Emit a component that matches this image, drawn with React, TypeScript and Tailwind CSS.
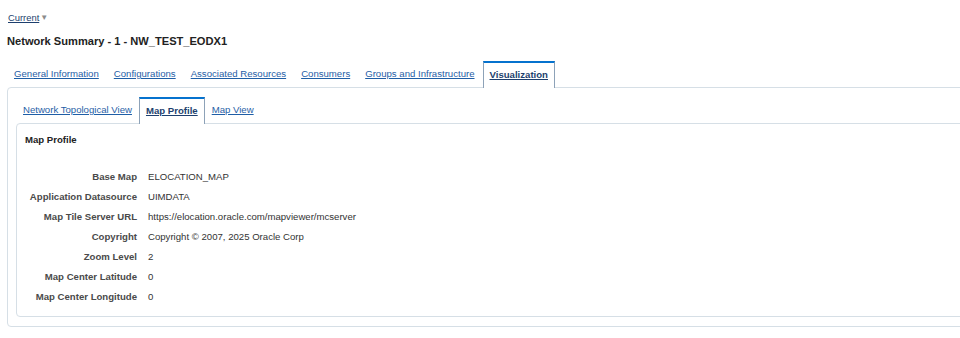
import React from "react";

const outerTabs = [
  "General Information",
  "Configurations",
  "Associated Resources",
  "Consumers",
  "Groups and Infrastructure",
];

const innerTabs = ["Network Topological View", "Map Profile", "Map View"];

const rows: [string, string][] = [
  ["Base Map", "ELOCATION_MAP"],
  ["Application Datasource", "UIMDATA"],
  ["Map Tile Server URL", "https://elocation.oracle.com/mapviewer/mcserver"],
  ["Copyright", "Copyright \u00a9 2007, 2025 Oracle Corp"],
  ["Zoom Level", "2"],
  ["Map Center Latitude", "0"],
  ["Map Center Longitude", "0"],
];

const Tab = ({ label, active }: { label: string; active?: boolean }) =>
  active ? (
    <div className="relative z-10 -mb-px flex h-[27px] items-center border-x border-t-2 border-x-[#8da2b8] border-t-[#0572ce] bg-white px-[6px]">
      <a href="#" className="font-bold text-[#1d3f6e] underline">
        {label}
      </a>
    </div>
  ) : (
    <div className="flex h-[26px] items-center px-[7px]">
      <a href="#" className="text-[#1f5ea6] underline">
        {label}
      </a>
    </div>
  );

const App = () => {
  return (
    <div className="h-[338px] w-[960px] overflow-hidden bg-white font-['Liberation_Sans',Arial,sans-serif] text-[9.6px] text-[#333]">
      <div className="flex h-[25px] items-end pl-[8px]">
        <a href="#" className="text-[9.4px] text-[#1d3f6e] underline">
          Current
        </a>
        <span className="ml-[1px] mb-[1px] text-[8px] text-[#8c8c8c]">▼</span>
      </div>
      <h1 className="mt-[9px] pl-[7px] text-[11.1px] font-bold leading-[14px] text-[#222]">
        Network Summary - 1 - NW_TEST_EODX1
      </h1>

      <div className="mt-[13px] flex items-end gap-px pl-[7px]">
        {outerTabs.map((t) => (
          <Tab key={t} label={t} />
        ))}
        <Tab label="Visualization" active />
      </div>

      <div className="ml-[7px] h-[240px] w-[1000px] rounded-[4px] border border-[#d6dfe6] pl-[8px] pt-[9px]">
        <div className="flex items-end">
          {innerTabs.map((t) => (
            <Tab key={t} label={t} active={t === "Map Profile"} />
          ))}
        </div>
        <div className="h-[194px] w-[1000px] rounded-[4px] border border-[#d6dfe6] pl-[8px] pt-[10px]">
          <h2 className="text-[9.6px] font-bold leading-[12px] text-[#222]">
            Map Profile
          </h2>
          <div className="mt-[21px] grid grid-cols-[112px_1fr] gap-x-[11px]">
            {rows.map(([k, v]) => (
              <React.Fragment key={k}>
                <div className="h-[20px] text-right font-bold leading-[20px] text-[#4a4a4a]">
                  {k}
                </div>
                <div className="h-[20px] leading-[20px] text-[#333]">{v}</div>
              </React.Fragment>
            ))}
          </div>
        </div>
      </div>
    </div>
  );
};

export default App;
